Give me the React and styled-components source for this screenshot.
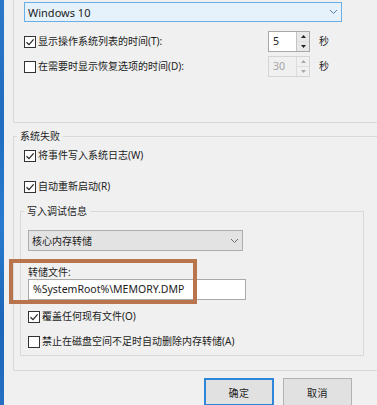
import React from "react";
import styled, { createGlobalStyle } from "styled-components";

const Global = createGlobalStyle`
  html, body { margin: 0; padding: 0; background: #f0f0f0; }
  body {
    font-family: "Noto Sans", "Noto Sans CJK SC", sans-serif;
    font-size: 10px;
    color: #1c1c1c;
    overflow: hidden;
  }
  * { box-sizing: border-box; }
`;

const Screen = styled.div`
  position: relative;
  display: flex;
  width: 377px;
  height: 405px;
  overflow: hidden;
  background: #f0f0f0;
`;

const DesktopEdge = styled.div`
  width: 4px;
  flex: none;
  background: linear-gradient(180deg, #2c78c8 0%, #1f6cc0 30%, #2a7bd0 55%, #1b66b8 80%, #2470c2 100%);
`;

const Dialog = styled.div`
  flex: 1;
  display: flex;
  flex-direction: column;
  min-width: 0;
`;

const Group = styled.div`
  flex: none;
  margin-top: ${p => p.$top || 0}px;
  margin-left: ${p => p.$left || 0}px;
  width: ${p => p.$width ? `${p.$width}px` : "auto"};
  margin-right: ${p => p.$open ? "-10px" : "0"};
  height: ${p => p.$height}px;
  border: 1px solid #d9d9d9;
  border-top: ${p => p.$noTop ? "none" : "1px solid #d9d9d9"};
  border-right: ${p => p.$open ? "none" : "1px solid #d9d9d9"};
  padding-top: ${p => p.$padTop || 0}px;
  display: flex;
  flex-direction: column;
  align-items: flex-start;
`;

const Caption = styled.div`
  margin: -7px 0 0 3px;
  padding: 0 3px;
  line-height: 13px;
  height: 13px;
  background: #f0f0f0;
  white-space: nowrap;
`;

const Select = styled.div`
  margin-top: ${p => p.$top || 0}px;
  margin-left: ${p => p.$left || 0}px;
  width: ${p => p.$width}px;
  height: ${p => p.$height}px;
  display: flex;
  align-items: center;
  justify-content: space-between;
  padding: 0 3px 0 3px;
  background: ${p => p.$focus ? "#e5f1fb" : "#e3e3e3"};
  border: 1px solid ${p => p.$focus ? "#6aaee6" : "#adadad"};
  white-space: nowrap;
`;

const SelectText = styled.span`
  font-size: ${p => p.$size || 10}px;
`;

const Chevron = ({ color = "#6b6b6b" }) => (
  <svg width="9" height="6" viewBox="0 0 9 6">
    <polyline points="1,1 4.5,4.5 8,1" fill="none" stroke={color} strokeWidth="1" />
  </svg>
);

const SpinRow = styled.div`
  margin-top: ${p => p.$top || 0}px;
  margin-left: 10px;
  display: grid;
  grid-template-columns: 235px 42px auto;
  column-gap: 9px;
  align-items: center;
  height: 21px;
`;

const CheckLine = styled.label`
  display: flex;
  align-items: center;
  gap: 2px;
  height: 13px;
  line-height: 13px;
  margin-top: ${p => p.$top || 0}px;
  margin-left: ${p => p.$left || 0}px;
  white-space: nowrap;
`;

const Box = styled.span`
  width: 12px;
  height: 12px;
  flex: none;
  border: 1px solid #333;
  background: #fff;
  display: flex;
  align-items: center;
  justify-content: center;
`;

const Check = ({ checked, children, top, left }) => (
  <CheckLine $top={top} $left={left}>
    <Box>
      {checked && (
        <svg width="10" height="10" viewBox="0 0 10 10">
          <polyline points="1.5,5.2 4,7.6 8.6,2.4" fill="none" stroke="#222" strokeWidth="1.2" />
        </svg>
      )}
    </Box>
    <span>{children}</span>
  </CheckLine>
);

const Spinner = styled.div`
  display: flex;
  height: 21px;
  width: 42px;
  border: 1px solid ${p => p.$disabled ? "#d4d4d4" : "#a8a8a8"};
  background: ${p => p.$disabled ? "#f0f0f0" : "#fff"};
`;

const SpinValue = styled.div`
  flex: 1;
  padding-left: 4px;
  line-height: 19px;
  font-size: 10.5px;
  color: ${p => p.$disabled ? "#a6a6a6" : "#1c1c1c"};
`;

const SpinArrows = styled.div`
  width: 13px;
  display: flex;
  flex-direction: column;
  border-left: 1px solid ${p => p.$disabled ? "#dcdcdc" : "#c4c4c4"};
  background: ${p => p.$disabled ? "#f0f0f0" : "#e8e8e8"};
`;

const SpinBtn = styled.div`
  flex: 1;
  display: flex;
  align-items: center;
  justify-content: center;
  & + & { border-top: 1px solid ${p => p.$disabled ? "#e0e0e0" : "#cfcfcf"}; }
`;

const Tri = ({ up, color }) => (
  <svg width="5" height="3" viewBox="0 0 5 3">
    <polygon points={up ? "0,3 5,3 2.5,0" : "0,0 5,0 2.5,3"} fill={color} />
  </svg>
);

const Spin = ({ value, disabled }) => {
  const c = disabled ? "#a8a8a8" : "#222";
  return (
    <Spinner $disabled={disabled}>
      <SpinValue $disabled={disabled}>{value}</SpinValue>
      <SpinArrows $disabled={disabled}>
        <SpinBtn $disabled={disabled}><Tri up color={c} /></SpinBtn>
        <SpinBtn $disabled={disabled}><Tri color={c} /></SpinBtn>
      </SpinArrows>
    </Spinner>
  );
};

const Unit = styled.span`
  line-height: 13px;
`;

const FieldLabel = styled.div`
  margin: ${p => p.$top}px 0 0 ${p => p.$left}px;
  line-height: 12px;
  height: 12px;
`;

const TextInput = styled.div`
  margin: ${p => p.$top}px 0 0 ${p => p.$left}px;
  width: ${p => p.$width}px;
  height: 21px;
  border: 1px solid #a9a9a9;
  background: #fff;
  padding-left: 4px;
  line-height: 19px;
  font-size: 10.5px;
  white-space: nowrap;
`;

const ButtonBar = styled.div`
  margin-top: 7px;
  display: flex;
  justify-content: flex-end;
  gap: 9px;
  padding-right: 25px;
`;

const Button = styled.div`
  width: ${p => p.$width}px;
  height: 28px;
  display: flex;
  align-items: center;
  justify-content: center;
  background: #e1e1e1;
  border: ${p => p.$primary ? "2px solid #2f86d8" : "1px solid #b3b3b3"};
  letter-spacing: 0.5px;
`;

const Highlight = styled.div`
  position: absolute;
  left: 9px;
  top: 259px;
  width: 188px;
  height: 45px;
  border: 4px solid #b8744c;
  pointer-events: none;
`;

export default function App() {
  return (
    <>
      <Global />
      <Screen>
        <DesktopEdge />
        <Dialog>
          <Group $left={9} $height={123} $noTop $open $padTop={2}>
            <Select $focus $left={10} $width={318} $height={20}>
              <SelectText $size={11}>Windows 10</SelectText>
              <Chevron color="#5a7fa6" />
            </Select>
            <SpinRow $top={9}>
              <Check checked>显示操作系统列表的时间(T):</Check>
              <Spin value="5" />
              <Unit>秒</Unit>
            </SpinRow>
            <SpinRow $top={4}>
              <Check>在需要时显示恢复选项的时间(D):</Check>
              <Spin value="30" disabled />
              <Unit>秒</Unit>
            </SpinRow>
          </Group>

          <Group $top={13} $left={9} $height={235} $open>
            <Caption>系统失败</Caption>
            <Check checked top={6} left={10}>将事件写入系统日志(W)</Check>
            <Check checked top={18} left={10}>自动重新启动(R)</Check>
            <Group $top={18} $left={6} $width={344} $height={145}>
              <Caption>写入调试信息</Caption>
              <Select $top={12} $left={7} $width={215} $height={21}>
                <SelectText>核心内存转储</SelectText>
                <Chevron />
              </Select>
              <FieldLabel $top={15} $left={7}>转储文件:</FieldLabel>
              <TextInput $top={1} $left={7} $width={218}>%SystemRoot%\MEMORY.DMP</TextInput>
              <Check checked top={10} left={7}>覆盖任何现有文件(O)</Check>
              <Check top={12} left={7}>禁止在磁盘空间不足时自动删除内存转储(A)</Check>
            </Group>
          </Group>

          <ButtonBar>
            <Button $primary $width={70}>确定</Button>
            <Button $width={69}>取消</Button>
          </ButtonBar>
        </Dialog>
        <Highlight />
      </Screen>
    </>
  );
}
